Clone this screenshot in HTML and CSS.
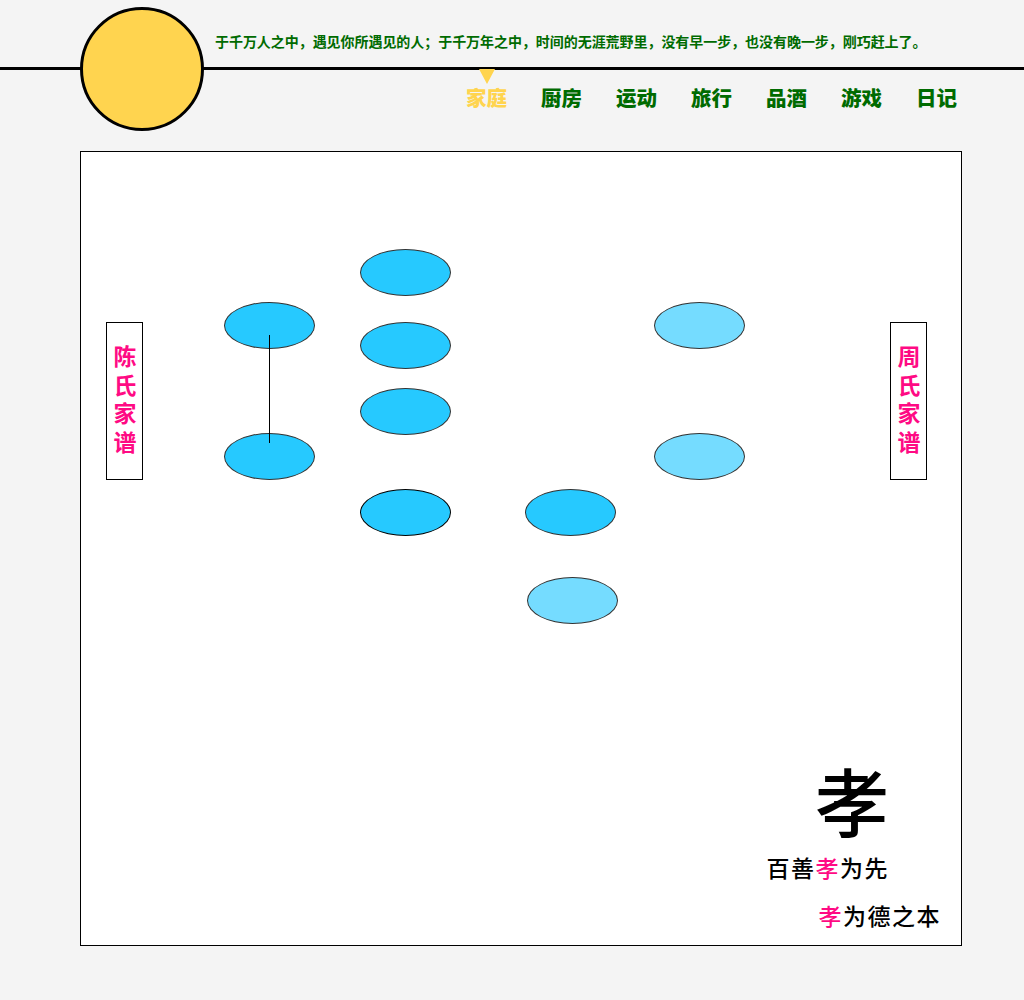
FILE: index.html
```html
<!DOCTYPE html>
<html lang="zh">
<head>
<meta charset="utf-8">
<title>家庭</title>
<link rel="stylesheet" href="styles.css">
</head>
<body>
<header class="header">
  <div class="logo"></div>
  <p class="tagline">于千万人之中，遇见你所遇见的人；于千万年之中，时间的无涯荒野里，没有早一步，也没有晚一步，刚巧赶上了。</p>
  <div class="rule"></div>
  <nav class="nav">
    <a class="nav-item active" href="#">家庭</a>
    <a class="nav-item" href="#">厨房</a>
    <a class="nav-item" href="#">运动</a>
    <a class="nav-item" href="#">旅行</a>
    <a class="nav-item" href="#">品酒</a>
    <a class="nav-item" href="#">游戏</a>
    <a class="nav-item" href="#">日记</a>
  </nav>
</header>
<main class="board">
  <div class="label label-left">陈氏家谱</div>
  <div class="label label-right">周氏家谱</div>

  <div class="node n-a"></div>
  <div class="node n-b"></div>
  <div class="link"></div>
  <div class="node n-c1"></div>
  <div class="node n-c2"></div>
  <div class="node n-c3"></div>
  <div class="node n-c4 dark"></div>
  <div class="node n-d"></div>
  <div class="node light n-e"></div>
  <div class="node light n-f"></div>
  <div class="node light n-g"></div>

  <div class="quote">
    <div class="big">孝</div>
    <div class="line1">百善<span class="pink">孝</span>为先</div>
    <div class="line2"><span class="pink">孝</span>为德之本</div>
  </div>
</main>
</body>
</html>
```
FILE: styles.css
```css
html, body {
  margin: 0;
  padding: 0;
  background: #f4f4f4;
  font-family: "Noto Sans CJK SC", "Noto Sans", sans-serif;
}

.header {
  position: relative;
  height: 151px;
}

.logo {
  position: absolute;
  left: 80px;
  top: 7px;
  width: 118px;
  height: 118px;
  border: 3px solid #000;
  border-radius: 50%;
  background: #ffd44f;
  z-index: 2;
}

.tagline {
  margin: 0;
  padding: 31px 0 0 215px;
  height: 36px;
  font-size: 14px;
  line-height: 20px;
  font-weight: 700;
  color: #006b00;
  letter-spacing: -0.05px;
  white-space: nowrap;
}

.rule {
  height: 3px;
  background: #000;
}

.nav {
  display: flex;
  gap: 34px;
  padding-left: 466px;
  margin-top: 13px;
}

.nav-item {
  position: relative;
  font-size: 20.5px;
  line-height: 28px;
  font-weight: 900;
  color: #006b00;
  text-decoration: none;
}

.nav-item.active {
  color: #ffd44f;
}

.nav-item.active::before {
  content: "";
  position: absolute;
  left: 13px;
  top: -14px;
  border-left: 8px solid transparent;
  border-right: 8px solid transparent;
  border-top: 15px solid #ffd44f;
}

.board {
  position: relative;
  box-sizing: border-box;
  margin-left: 80px;
  width: 882px;
  height: 795px;
  background: #fff;
  border: 1px solid #000;
  display: flex;
  flex-direction: column;
  justify-content: flex-end;
  align-items: flex-end;
}

.label {
  position: absolute;
  top: 170px;
  box-sizing: border-box;
  width: 37px;
  height: 158px;
  border: 1px solid #000;
  background: #fff;
  color: #ff0a84;
  font-size: 23px;
  line-height: 35px;
  font-weight: 700;
  writing-mode: vertical-rl;
  text-orientation: upright;
  letter-spacing: 5.5px;
  padding-top: 22px;
}

.label-left { left: 25px; }
.label-right { left: 809px; }

.node {
  position: absolute;
  box-sizing: border-box;
  width: 91px;
  height: 47px;
  border: 1px solid #333;
  border-radius: 50%;
  background: #26c9ff;
}

.node.light { background: #75dcff; }
.node.dark { border-color: #000; }

.n-a  { left: 143px; top: 150px; }
.n-b  { left: 143px; top: 281px; }
.n-c1 { left: 279px; top: 97px; }
.n-c2 { left: 279px; top: 170px; }
.n-c3 { left: 279px; top: 236px; }
.n-c4 { left: 279px; top: 337px; }
.n-d  { left: 444px; top: 337px; }
.n-e  { left: 446px; top: 425px; }
.n-f  { left: 573px; top: 150px; }
.n-g  { left: 573px; top: 281px; }

.link {
  position: absolute;
  left: 188px;
  top: 183px;
  width: 1px;
  height: 108px;
  background: #000;
  z-index: 1;
}

.quote {
  display: flex;
  flex-direction: column;
  align-items: flex-end;
  padding: 0 20px 15px 0;
  color: #000;
}

.big {
  font-size: 74px;
  line-height: 74px;
  font-weight: 500;
  margin-right: 52px;
}

.line1 {
  font-size: 23px;
  line-height: 30px;
  font-weight: 500;
  letter-spacing: 1.5px;
  margin-right: 52px;
  margin-top: 16px;
}

.line2 {
  font-size: 23px;
  line-height: 30px;
  font-weight: 500;
  letter-spacing: 1.5px;
  margin-top: 18px;
}

.pink { color: #ff0a84; }
```
